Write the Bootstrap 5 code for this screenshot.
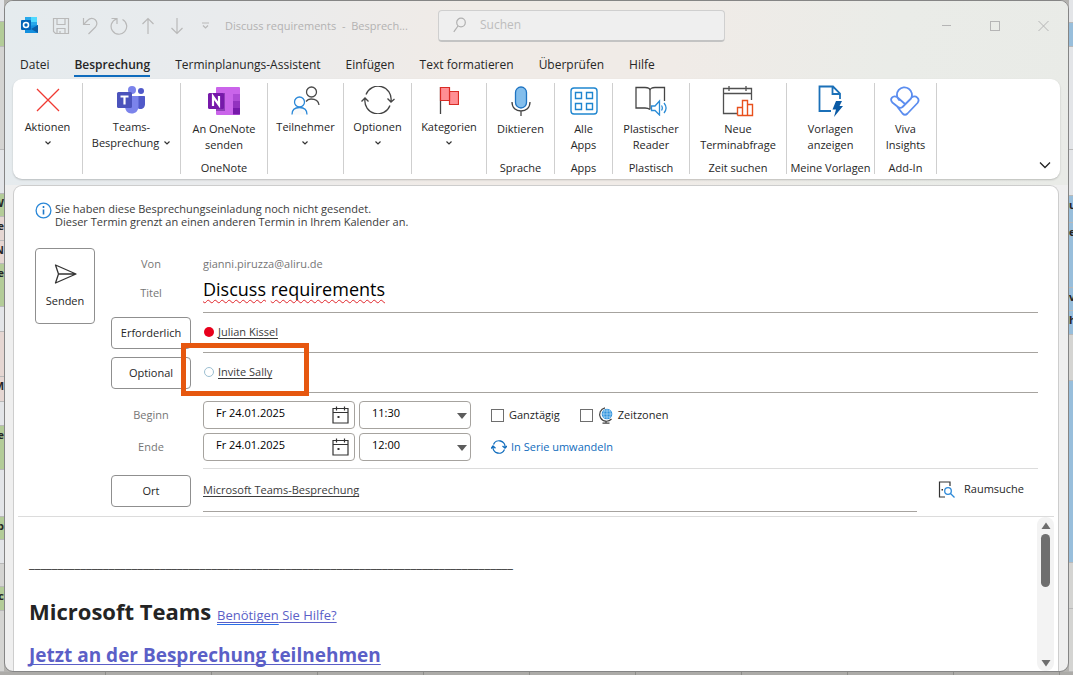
<!DOCTYPE html>
<html lang="de">
<head>
<meta charset="utf-8">
<meta name="viewport" content="width=device-width, initial-scale=1">
<title>Discuss requirements - Besprechung</title>
<link rel="stylesheet" href="https://cdn.jsdelivr.net/npm/bootstrap@5.3.0/dist/css/bootstrap.min.css">
<style>
  :root { --line: #a6a39f; --ink: #262626; --muted: #767676; --accent: #0f6cbd; }
  body { font-family: "Open Sans", "Noto Sans", sans-serif; font-size: 11px; line-height: 16px; color: var(--ink); background: #b4b3b0; }
  svg { display: block; flex: none; fill: none; }
  button { color: inherit; }

  /* calendar behind the window */
  .strip { width: 4px; flex: none; font-weight: 700; background: #d4d4d2; }
  .strip > div { border-bottom: 1px solid #b9b9b9; overflow: hidden; line-height: 18px; display: flex; justify-content: flex-end; min-height: 0; }
  .strip.right > div { justify-content: flex-start; }
  .green { background: #b3cc98; } .rose { background: #e5d6d2; } .blue { background: #98bedb; } .pale { background: #e3e5e8; }
  .underside { height: 3px; background: repeating-linear-gradient(90deg, #acaba8 0 105px, #8d8d8a 105px 106px); }

  .window { border: 1px solid #858585; border-radius: 9px; background: #efefef; min-width: 0; }
  .chrome { background: linear-gradient(100deg, #e5ebee 0%, #e9ebed 20%, #f0ebe7 42%, #f0ebe7 62%, #eaece8 82%, #e9ebe7 100%); padding-bottom: 6px; }

  .titlebar { height: 49px; padding-left: 16px; padding-right: 18px; color: #b3b2b2; }
  .tool { padding: 0; border: 0; background: none; width: 29px; color: #b9b9b9; }
  .tool svg, .winbtn svg { stroke: currentColor; }
  .doc { width: 186px; margin-left: 5px; white-space: pre; }
  .finder { width: 287px; height: 32px; margin-left: 27px; padding: 0 14px; gap: 14px; background: #efefef; border: 1px solid #cfcfcf; border-bottom: 2px solid #c3c3c3; border-radius: 4px; }
  .finder input { border: 0; background: none; outline: 0; font-size: 12px; padding: 0; color: #444; }
  .finder input::placeholder { color: #bdbdbd; opacity: 1; }
  .winbtn { width: 14px; padding: 0; border: 0; background: none; color: #b5b5b5; }

  .tabs { gap: 25px; padding: 5px 15px 0; height: 29px; font-size: 12px; }
  .tabs a { color: var(--ink); text-decoration: none; line-height: 19px; height: 22px; border-bottom: 2px solid transparent; white-space: nowrap; }
  .tabs a.active { font-weight: 600; border-color: var(--accent); }

  .ribbon { margin: 0 8px; height: 100px; background: #fff; border-radius: 9px; box-shadow: 0 1px 2px #0003; display: grid; grid-template-columns: 70px 98px 87px 76px 68px 75px 68px 58px 77px 97px 88px 62px 1fr; padding: 4px 0 5px; }
  .group { border-right: 1px solid #cfcfcf; display: flex; flex-direction: column; align-items: center; }
  .group > button { border: 0; background: none; padding: 0; text-align: center; line-height: 16px; white-space: nowrap; }
  .group > button svg { margin: 0 auto; }
  .group .pic { height: 36px; padding-bottom: 2px; display: flex; align-items: center; justify-content: center; }
  .group.labelled .pic { height: 38px; }
  .group > span { margin-top: auto; line-height: 12px; white-space: nowrap; }
  .chev { height: 16px; display: flex; align-items: center; }
  .fold { border: 0; background: none; padding: 0; align-self: end; justify-self: end; margin-right: 9px; margin-bottom: 5px; }

  .sheet { margin: 0 9px 0 8px; background: #fff; border: 1px solid #cdcdcd; border-bottom: 0; border-radius: 9px 9px 0 0; min-height: 0; }
  .notice { padding: 16px 21px 0; gap: 3px; line-height: 13px; color: #3b3b3b; }
  .form { padding: 20px 20px 0 21px; gap: 16px; }
  .boxbtn { background: #fff; border: 1px solid #8f8f8f; border-radius: 4px; padding: 0; }
  .send { width: 60px; height: 76px; gap: 9px; }
  .cap { width: 80px; flex: none; text-align: center; }
  .cap .boxbtn { width: 80px; height: 32px; }
  .line { display: flex; gap: 12px; position: relative; }
  .line > :last-child { flex: 1 1 0; min-width: 0; }
  .muted { color: var(--muted); }
  .h32 { height: 32px; } .h33 { height: 33px; } .h40 { height: 40px; } .h28 { height: 28px; } .h43 { height: 43px; }
  .ruled { border-bottom: 1px solid var(--line); }
  .person { gap: 4px; padding: 0 0 2px 1px; }
  .titlecap { line-height: 26px; }
  .subject { font-size: 18px; line-height: 18px; height: 22px; color: #000; outline: 0; }
  .subject span { text-decoration: underline wavy #e0262b 1px; text-underline-offset: 3px; text-decoration-skip-ink: none; }
  .ref { color: #3b3b3b; text-decoration: underline; text-underline-offset: 2px; text-decoration-skip-ink: none; }
  .dot { width: 10px; height: 10px; border-radius: 50%; background: #e8001c; flex: none; }
  .dot.open { background: #fff; border: 1px solid #9dbfd2; }
  .marker { position: absolute; left: 70px; top: -10px; width: 128px; height: 53px; border: 5px solid #e6570f; }
  .datebox, .timebox { height: 28px; border: 1px solid #a6a39f; border-radius: 4px; background: #fff; color: #000; }
  .datebox { width: 152px; padding: 0 5px 0 12px; }
  .datebox input { border: 0; outline: 0; padding: 0 0 4px; min-width: 0; flex: 1; color: #000; }
  .datebox button { border: 0; background: none; padding: 0; }
  .timebox { width: 112px; padding: 0 12px 4px; margin-left: 4px; appearance: none; background: #fff url("data:image/svg+xml,%3Csvg xmlns='http://www.w3.org/2000/svg' width='10' height='6'%3E%3Cpath d='M0 0h10L5 6z' fill='%235c5c5c'/%3E%3C/svg%3E") no-repeat right 3px top 11px; }
  .tick { appearance: none; width: 13px; height: 13px; border: 1px solid #6e6e6e; background: #fff; margin: 0; flex: none; }
  .tick:checked { background: var(--accent); }
  .opts { margin-left: 20px; gap: 5px; }
  .series { color: var(--accent); text-decoration: none; gap: 4px; margin-left: 20px; }
  .spacer { height: 8px; border-bottom: 1px solid #dcdcdc; }
  .place { padding-bottom: 1px; }
  .room { border: 0; background: none; padding: 0 0 3px; gap: 9px; margin-left: 21px; width: 100px; flex: none; }

  .message { margin: 4px 4px 0; border-top: 1px solid #dcdcdc; min-height: 0; overflow: hidden; }
  .mail { padding: 37px 0 0 11px; min-width: 0; flex: 1; white-space: nowrap; overflow: hidden; color: #242424; }
  .mail .rule { font-size: 13px; line-height: 18px; margin: 0; }
  .mail h1 { font-size: 22px; font-weight: 700; line-height: 34px; margin: 22px 0 0; }
  .mail h2 { font-size: 19px; font-weight: 700; line-height: 28px; margin: 9px 0 0; }
  .mail a { color: #5b5fc7; text-underline-offset: 2px; text-decoration-skip-ink: none; }
  .mail .help { font-size: 13px; }
  .mail .help u { text-decoration: underline #2a6fe8 1px; text-underline-offset: 4px; text-decoration-skip-ink: none; }
  .track { width: 17px; background: #f3f3f3; border-radius: 8px; padding: 5px 0 4px; flex: none; }
  .thumb { width: 9px; height: 53px; border-radius: 5px; background: #6e6e6e; margin-top: 5px; }
</style>
</head>
<body class="vh-100 overflow-hidden d-flex flex-column">

<div class="d-flex flex-grow-1" style="min-height:0">
  <div class="strip d-flex flex-column overflow-hidden" aria-hidden="true">
    <div class="pale" style="flex:22"></div><div class="green" style="flex:24"></div><div style="flex:105"></div>
    <div class="pale" style="flex:45"></div><div class="green" style="flex:22">W</div><div class="rose" style="flex:24">Te</div>
    <div class="rose" style="flex:22">N</div><div class="green" style="flex:44">e</div><div class="pale" style="flex:24"></div><div class="rose" style="flex:46"></div>
    <div class="rose" style="flex:24">M</div><div class="pale" style="flex:24"></div><div class="green" style="flex:44">e</div>
    <div class="pale" style="flex:48"></div><div class="green" style="flex:22">b</div><div class="pale" style="flex:24"></div>
    <div style="flex:23"></div><div class="green" style="flex:23">ic</div><div style="flex:62"></div>
  </div>

  <main class="window flex-grow-1 d-flex flex-column overflow-hidden">
    <div class="chrome">
      <header class="titlebar d-flex align-items-center">
        <svg width="17" height="17" viewBox="0 0 17 17" class="me-1" role="img" aria-label="Outlook"><path fill="#28a8ea" d="M4 0h12v9H4z"/><path fill="#50d9ff" d="M10 0h6v5h-6z"/><path fill="#0078d4" d="M4 5h6v5H4z"/><path fill="#1490df" d="M17 8v8H4V9z"/><path fill="#0a5ea8" d="m17 8-7 4 7 4z"/><rect y="3" width="10" height="10" rx="1" fill="#0364b8"/><circle cx="5" cy="8" r="2.500" stroke="#fff" stroke-width="1.600"/></svg>
        <button class="tool ms-1" aria-label="Speichern"><svg class="mx-auto" width="18" height="18" viewBox="0 0 18 18" stroke-width="1.200"><path d="M1.500 1.500h15v15H3.500l-2-2zM5 1.500v6h8v-6M5 16.500v-5h8v5M8 16v-2"/></svg></button>
        <button class="tool" aria-label="Rückgängig"><svg class="mx-auto" width="18" height="18" viewBox="0 0 18 18" stroke-width="1.200"><path d="M2.500 1v6.500H9M2.500 7.500 7 3a5 5 0 0 1 7.500 7L7.500 17"/></svg></button>
        <button class="tool" aria-label="Wiederholen"><svg class="mx-auto" width="18" height="18" viewBox="0 0 18 18" stroke-width="1.200"><path d="M1.500 1.500H7V7M6.500 2a7.800 7.800 0 1 0 6 .5"/></svg></button>
        <button class="tool" aria-label="Vorheriges Element"><svg class="mx-auto" width="18" height="18" viewBox="0 0 18 18" stroke-width="1.200"><path d="M9 17V1.500M3.500 7 9 1.500 14.500 7"/></svg></button>
        <button class="tool" aria-label="Nächstes Element"><svg class="mx-auto" width="18" height="18" viewBox="0 0 18 18" stroke-width="1.200"><path d="M9 1v15.500M3.500 11 9 16.500 14.500 11"/></svg></button>
        <button class="tool" aria-label="Anpassen"><svg class="mx-auto" width="9" height="8" viewBox="0 0 9 8" stroke-width="1.200"><path d="M1 1h7M2 3.500l2.500 2.500L7 3.500"/></svg></button>
        <span class="doc">Discuss requirements  -  Besprech...</span>
        <label class="finder d-flex align-items-center">
          <svg width="13" height="16" viewBox="0 0 13 16" stroke="#b0b0b0" stroke-width="1.200"><circle cx="8" cy="5.500" r="4.300"/><path d="M5 9 .8 14.800"/></svg>
          <input type="text" class="flex-grow-1" placeholder="Suchen" aria-label="Suchen">
        </label>
        <div class="ms-auto d-flex" style="gap:34px">
          <button class="winbtn" aria-label="Minimieren"><svg width="14" height="12" viewBox="0 0 14 12"><path d="M2 5.500h9"/></svg></button>
          <button class="winbtn" aria-label="Maximieren"><svg width="14" height="12" viewBox="0 0 14 12"><rect x="2.500" y="1.500" width="9" height="9"/></svg></button>
          <button class="winbtn" aria-label="Schließen"><svg width="14" height="12" viewBox="0 0 14 12"><path d="m2.500 1 10 10m0-10-10 10"/></svg></button>
        </div>
      </header>

      <nav class="tabs d-flex" aria-label="Menüband">
        <a href="#">Datei</a><a href="#" class="active">Besprechung</a><a href="#">Terminplanungs-Assistent</a><a href="#">Einfügen</a><a href="#">Text formatieren</a><a href="#">Überprüfen</a><a href="#">Hilfe</a>
      </nav>

      <section class="ribbon" aria-label="Besprechung">
        <div class="group"><button><div class="pic"><svg width="24" height="24" viewBox="0 0 24 24" stroke="#f03a32" stroke-width="1.300"><path d="m1 1 22 22M23 1 1 23"/></svg></div>Aktionen<div class="chev"><svg width="8" height="6" viewBox="0 0 8 6" stroke="#333" stroke-width="1.200"><path d="m1.500 1.500 2.500 2.500 2.500-2.500"/></svg></div></button></div>

        <div class="group"><button><div class="pic"><svg width="30" height="30" viewBox="0 0 30 30"><circle cx="16" cy="5" r="4" fill="#7b83eb"/><circle cx="25" cy="6" r="3" fill="#5059c9"/><path fill="#5059c9" d="M20 11h8c.6 0 1 .4 1 1v7c0 3-2 5-4.500 5S20 22 20 19z"/><path fill="#7b83eb" d="M9 11h13.500v10c0 5-3 7.500-7 7.500S9 25.500 9 21z"/><rect x="1" y="7" width="15" height="16" rx="1.500" fill="#4b53bc"/><path d="M4.500 11.500h8M8.500 11.500v8" stroke="#fff" stroke-width="2.200"/></svg></div>Teams-<br><span class="d-inline-flex align-items-center gap-1">Besprechung <svg width="8" height="6" viewBox="0 0 8 6" stroke="#333" stroke-width="1.200"><path d="m1.500 1.500 2.500 2.500 2.500-2.500"/></svg></span></button></div>

        <div class="group labelled"><button><div class="pic"><svg width="33" height="30" viewBox="0 0 33 30"><rect x="9" y="1" width="24" height="28" rx="1" fill="#ca64ea"/><path fill="#ae4bd5" d="M26 8h7v7h-7z"/><path fill="#9332bf" d="M26 15h7v7h-7z"/><path fill="#7719aa" d="M26 22h7v6.500h-7z"/><path fill="#8f3fb8" d="M9 7h9v18H9z"/><rect x="1" y="7" width="16" height="16" rx="1.500" fill="#7719aa"/><path d="M6 20v-9.500l6 8.500v-9" stroke="#fff" stroke-width="2.200"/></svg></div>An OneNote<br>senden</button><span>OneNote</span></div>

        <div class="group"><button><div class="pic"><svg width="29" height="29" viewBox="0 0 29 29" stroke-width="1.300"><g stroke="#4a4a4a"><circle cx="20.500" cy="6" r="5"/><path d="M15 15.500c1.500-2 3-2.500 5-2.500 4.500 0 7.500 2 8 6"/></g><g stroke="#2b88d8"><circle cx="8.500" cy="16" r="5"/><path fill="#fafafa" d="M1 28.500c0-4.500 3-7 7.500-7s7.500 2.500 7.500 7"/></g></svg></div>Teilnehmer<div class="chev"><svg width="8" height="6" viewBox="0 0 8 6" stroke="#333" stroke-width="1.200"><path d="m1.500 1.500 2.500 2.500 2.500-2.500"/></svg></div></button></div>

        <div class="group"><button><div class="pic"><svg width="34" height="28" viewBox="0 0 34 28" stroke="#444" stroke-width="1.300"><path d="M5 8.500A13 13 0 0 1 30 15M26.500 12.500 30 16l3.500-3M29 19.500A13 13 0 0 1 4 13M.5 15.500 4 12l3.500 3.500"/></svg></div>Optionen<div class="chev"><svg width="8" height="6" viewBox="0 0 8 6" stroke="#333" stroke-width="1.200"><path d="m1.500 1.500 2.500 2.500 2.500-2.500"/></svg></div></button></div>

        <div class="group"><button><div class="pic"><svg width="20" height="29" viewBox="0 0 20 29"><path d="M1.500 1v27" stroke="#444" stroke-width="1.300"/><path d="M10.500 5.500h9v13h-9z" fill="#ff8f94" stroke="#d92c26" stroke-width="1.200"/><path d="M1.500 1.500h9v13h-9z" fill="#ff8f94" stroke="#d92c26" stroke-width="1.200"/></svg></div>Kategorien<div class="chev"><svg width="8" height="6" viewBox="0 0 8 6" stroke="#333" stroke-width="1.200"><path d="m1.500 1.500 2.500 2.500 2.500-2.500"/></svg></div></button></div>

        <div class="group labelled"><button><div class="pic"><svg width="20" height="30" viewBox="0 0 20 30" stroke-width="1.300"><rect x="4.500" y="1" width="11" height="21" rx="5.500" fill="#83beec" stroke="#1f74c2"/><path d="M1 16c0 6 4 9 9 9s9-3 9-9M10 25v5" stroke="#444"/></svg></div>Diktieren</button><span>Sprache</span></div>

        <div class="group labelled"><button><div class="pic"><svg width="28" height="28" viewBox="0 0 28 28" stroke="#1f86d0" stroke-width="1.400"><rect x="1" y="1" width="26" height="26" rx="3"/><path d="M5.500 5.500h6v6h-6zM16.500 5.500h6v6h-6zM5.500 16.500h6v6h-6zM16.500 16.500h6v6h-6z"/></svg></div>Alle<br>Apps</button><span>Apps</span></div>

        <div class="group labelled"><button><div class="pic"><svg width="32" height="30" viewBox="0 0 32 30" stroke-width="1.300"><path d="M15 23.500c-2-1.500-3.500-1.500-5-1.500H1V1.500h9c3 0 5 1 5 3v19M15 4.500c0-2 2-3 5-3h9.500V15" stroke="#444"/><g stroke="#2b8cd6"><path d="M16.500 20h3.500l4.500-5v14L20 24.500h-3.500zM26.500 19.500c1 1.500 1 3.500 0 5M29 17c2.500 3 2.500 7 0 10"/></g></svg></div>Plastischer<br>Reader</button><span>Plastisch</span></div>

        <div class="group labelled"><button><div class="pic"><svg width="32" height="32" viewBox="0 0 32 32" stroke-width="1.300"><path d="M15 28.500H1.500V3.500h28V15M1.500 8.500h28M7 1v5M24 1v5" stroke="#505050"/><path d="M15.500 30.500v-8h5v8M20.500 30.500v-15h5v15M25.500 19.500h5v11h-15" stroke="#e8501c" stroke-width="1.400"/></svg></div>Neue<br>Terminabfrage</button><span>Zeit suchen</span></div>

        <div class="group labelled"><button><div class="pic"><svg width="25" height="32" viewBox="0 0 25 32"><path d="M13 26H1.500V1.500H15L22 8.500V14M14.500 2v7H22" stroke="#1b70b8" stroke-width="1.800"/><path fill="#0a5aa5" d="M18 16h6l-2.500 5H25l-9 11 2-7.500h-3.500z"/></svg></div>Vorlagen<br>anzeigen</button><span>Meine Vorlagen</span></div>

        <div class="group labelled"><button><div class="pic"><svg width="30" height="30" viewBox="0 0 30 30" stroke="#5b8def" stroke-width="1.800" stroke-linejoin="round" stroke-linecap="round"><path d="M9 14a7.500 7.500 0 1 1 12-1.500L12.500 21c-1.500 1.200-3 1.200-4.500 0L2.300 16.500c-3-3.500.5-7.500 4.700-5.500L15 18M21.500 11.500c4.500-3 9 1.500 6 5.500L17.500 27.500c-1.500 1.500-3.500 1.500-5 0L7.500 21"/></svg></div>Viva<br>Insights</button><span>Add-In</span></div>

        <button class="fold" aria-label="Menüband reduzieren"><svg width="12" height="8" viewBox="0 0 12 8" stroke="#222" stroke-width="1.300"><path d="m1 1.500 5 5 5-5"/></svg></button>
      </section>
    </div>

    <section class="sheet flex-grow-1 d-flex flex-column">
      <div class="notice d-flex">
        <svg width="17" height="17" viewBox="0 0 17 17"><circle cx="8.500" cy="8.500" r="7.400" stroke="#2b88d8" stroke-width="1.300"/><path d="M8.500 7.500v5M8.500 4v2" stroke="#1f78c8" stroke-width="1.600"/></svg>
        <div>Sie haben diese Besprechungseinladung noch nicht gesendet.<br>Dieser Termin grenzt an einen anderen Termin in Ihrem Kalender an.</div>
      </div>

      <div class="form d-flex">
        <button class="boxbtn send d-flex flex-column align-items-center justify-content-center">
          <svg width="23" height="20" viewBox="0 0 23 20" stroke="#333" stroke-width="1.300" stroke-linejoin="round"><path d="M1.500 1 22 10 1.500 19l3-9zM4.500 10H22"/></svg>
          Senden
        </button>
        <div class="flex-grow-1">
          <div class="line h32 align-items-center muted"><div class="cap">Von</div><div>gianni.piruzza@aliru.de</div></div>
          <div class="line h33 muted"><div class="cap titlecap" id="titel">Titel</div><div class="ruled"><div class="subject" contenteditable="true" role="textbox" spellcheck="false" aria-labelledby="titel"><span>Discuss</span> <span>requirements</span></div></div></div>
          <div class="line h40"><div class="cap d-flex align-items-center"><button class="boxbtn">Erforderlich</button></div><div class="ruled person d-flex align-items-center"><i class="dot"></i><a class="ref" href="#">Julian Kissel</a></div></div>
          <div class="line h40"><div class="cap d-flex align-items-center"><button class="boxbtn">Optional</button></div><div class="marker"></div><div class="ruled person d-flex align-items-center"><i class="dot open"></i><a class="ref" href="#">Invite Sally</a></div></div>

          <div class="line h28 mt-2 align-items-center">
            <label class="cap muted" for="d1">Beginn</label>
            <div class="d-flex align-items-center">
              <div class="datebox d-flex align-items-center"><input id="d1" type="text" value="Fr 24.01.2025"><button aria-label="Kalender öffnen"><svg width="17" height="18" viewBox="0 0 17 18" stroke="#333"><path d="M1 2.500h15v14.500H1zM1 6.500h15M4.500.5v4M12.500.5v4" stroke-width="1.200"/><path d="M5.500 10h2v2h-2z" fill="#333" stroke="none"/></svg></button></div>
              <select class="timebox" aria-label="Beginn, Uhrzeit"><option>11:30</option><option>12:00</option></select>
              <div class="opts d-flex align-items-center"><input class="tick" type="checkbox" id="c1"><label for="c1">Ganztägig</label></div>
              <div class="opts d-flex align-items-center"><input class="tick" type="checkbox" id="c2"><label for="c2" class="d-flex align-items-center gap-1"><svg width="16" height="17" viewBox="0 0 16 17"><circle cx="9" cy="7" r="5.300" fill="#2f93dd"/><path d="M9 2v10M4 7h10M5.500 4h7M5.500 10h7M6.500 3c-1 2-1 6 0 8M11.500 3c1 2 1 6 0 8" stroke="#b9ddf5" stroke-width=".7"/><path d="M7 .8A6.800 6.800 0 1 0 13.500 12M8 14v2M4.500 16.200h7" stroke="#444" stroke-width="1.200"/></svg>Zeitzonen</label></div>
            </div>
          </div>
          <div class="line h28 mt-1 align-items-center">
            <label class="cap muted" for="d2">Ende</label>
            <div class="d-flex align-items-center">
              <div class="datebox d-flex align-items-center"><input id="d2" type="text" value="Fr 24.01.2025"><button aria-label="Kalender öffnen"><svg width="17" height="18" viewBox="0 0 17 18" stroke="#333"><path d="M1 2.500h15v14.500H1zM1 6.500h15M4.500.5v4M12.500.5v4" stroke-width="1.200"/><path d="M5.500 10h2v2h-2z" fill="#333" stroke="none"/></svg></button></div>
              <select class="timebox" aria-label="Ende, Uhrzeit"><option>12:00</option><option>12:30</option></select>
              <a class="series d-flex align-items-center" href="#"><svg width="16" height="14" viewBox="0 0 16 14" stroke="#0f6cbd" stroke-width="1.300"><path d="M2.500 4.500a6 6 0 0 1 11.500 3M11.500 6l2.500 2.200L16 6M13.500 9.500A6 6 0 0 1 2 6.500M0 8.500 2 6l2.500 2.200"/></svg>In Serie umwandeln</a>
            </div>
          </div>
          <div class="line"><div class="cap"></div><div class="spacer"></div></div>
          <div class="line h43">
            <div class="cap d-flex align-items-center"><button class="boxbtn">Ort</button></div>
            <div class="d-flex">
              <div class="ruled flex-grow-1 d-flex align-items-center"><a class="ref" href="#">Microsoft Teams-Besprechung</a></div>
              <button class="room d-flex align-items-center"><svg width="17" height="17" viewBox="0 0 17 17"><path d="M7 16H1.500V1H12v4" stroke="#333" stroke-width="1.200"/><path d="M3.500 8h1.500v1.500H3.500z" fill="#333"/><circle cx="10" cy="10" r="3.300" stroke="#2b88d8" stroke-width="1.300"/><path d="m12.500 12.500 4 4" stroke="#2b88d8" stroke-width="1.300"/></svg>Raumsuche</button>
            </div>
          </div>
        </div>
      </div>

      <div class="message flex-grow-1 d-flex">
        <div class="mail">
          <p class="rule">_____________________________________________________________________________________</p>
          <h1>Microsoft Teams <a class="help fw-normal" href="#"><u>Benötigen</u> Sie Hilfe?</a></h1>
          <h2><a href="#">Jetzt an der Besprechung teilnehmen</a></h2>
        </div>
        <div class="track d-flex flex-column align-items-center">
          <svg width="10" height="7" viewBox="0 0 10 7"><path d="M5 0.500 9.500 7h-9z" fill="#6e6e6e"/></svg>
          <div class="thumb"></div>
          <svg class="mt-auto" width="10" height="7" viewBox="0 0 10 7"><path d="M5 6.500 9.500 0h-9z" fill="#6e6e6e"/></svg>
        </div>
      </div>
    </section>
  </main>

  <div class="strip right d-flex flex-column overflow-hidden" aria-hidden="true">
    <div class="pale" style="flex:22"></div><div class="blue" style="flex:24"></div><div class="pale" style="flex:104"></div><div class="pale" style="flex:45"></div>
    <div class="blue" style="flex:27">u</div><div class="blue" style="flex:65">e</div><div class="blue" style="flex:23">v</div><div class="blue" style="flex:23">h</div><div style="flex:46"></div>
    <div class="blue" style="flex:184"></div><div style="flex:46"></div><div style="flex:63"></div>
  </div>
</div>
<div class="underside"></div>

<script src="https://cdn.jsdelivr.net/npm/bootstrap@5.3.0/dist/js/bootstrap.bundle.min.js"></script>
</body>
</html>
